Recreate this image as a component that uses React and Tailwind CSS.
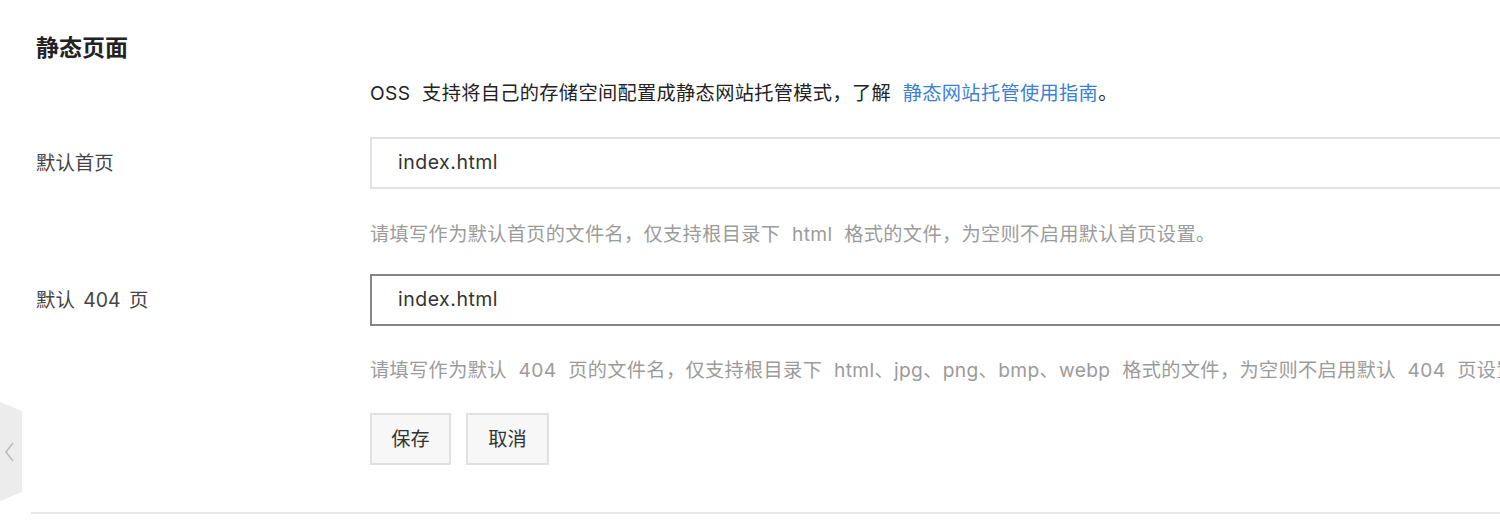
export default function App() {
  const font = { fontFamily: 'Inter, "Noto Sans CJK SC", sans-serif' };
  return (
    <div lang="zh-CN" className="relative h-[526px] w-[1500px] overflow-hidden bg-white text-[#333]" style={font}>
      <div className="pt-[33px]">
        <h2 className="pl-[36px] text-[23px] font-bold leading-[30px] text-[#222]">静态页面</h2>

        <div className="mt-[15px] flex">
          <div className="w-[370px] shrink-0" />
          <p className="whitespace-nowrap text-[19.2px] leading-[30px] tracking-[0.35px] text-[#222] [word-spacing:6px]">
            OSS 支持将自己的存储空间配置成静态网站托管模式，了解 <span className="text-[#3a7fd3]">静态网站托管使用指南</span>。
          </p>
        </div>

        <div className="mt-[29px] flex items-center">
          <label className="w-[370px] shrink-0 pl-[36px] text-[19.4px] leading-[30px] text-[#444] [word-spacing:3px]">默认首页</label>
          <div className="flex h-[52px] w-[1300px] shrink-0 items-center border-2 border-[#e2e2e2] pl-[26px] text-[19.5px] tracking-[0.5px] text-[#333]">
            index.html
          </div>
        </div>

        <div className="mt-[30px] flex">
          <div className="w-[370px] shrink-0" />
          <p className="whitespace-nowrap text-[19.2px] leading-[30px] tracking-[0.35px] text-[#9b9b9b] [word-spacing:6px]">
            请填写作为默认首页的文件名，仅支持根目录下 html 格式的文件，为空则不启用默认首页设置。
          </p>
        </div>

        <div className="mt-[25px] flex items-center">
          <label className="w-[370px] shrink-0 pl-[36px] text-[19.4px] leading-[30px] text-[#444] [word-spacing:3px]">默认 404 页</label>
          <div className="flex h-[52px] w-[1300px] shrink-0 items-center border-2 border-[#868686] pl-[26px] text-[19.5px] tracking-[0.5px] text-[#333]">
            index.html
          </div>
        </div>

        <div className="mt-[29px] flex">
          <div className="w-[370px] shrink-0" />
          <p className="whitespace-nowrap text-[19.2px] leading-[30px] tracking-[0.35px] text-[#9b9b9b] [word-spacing:6px]">
            请填写作为默认 404 页的文件名，仅支持根目录下 html、jpg、png、bmp、webp 格式的文件，为空则不启用默认 404 页设置。
          </p>
        </div>

        <div className="mt-[28px] flex gap-[15px] pl-[370px]">
          <button type="button" className="h-[52px] w-[81px] border-2 border-[#e0e0e0] bg-[#f7f7f7] text-[19.2px] text-[#333]">
            保存
          </button>
          <button type="button" className="h-[52px] w-[83px] border-2 border-[#e0e0e0] bg-[#f7f7f7] text-[19.2px] text-[#333]">
            取消
          </button>
        </div>

        <div className="ml-[31px] mt-[47px] border-t-2 border-[#e8e8e8]" />
      </div>

      <svg className="absolute left-0 top-[402px]" width="24" height="100" viewBox="0 0 24 100">
        <polygon points="0,0 22,9 22,90 0,99" fill="#ececec" />
        <polyline points="13,41 6,50 13,59" fill="none" stroke="#bcbcbc" strokeWidth="1.6" />
      </svg>
    </div>
  );
}
